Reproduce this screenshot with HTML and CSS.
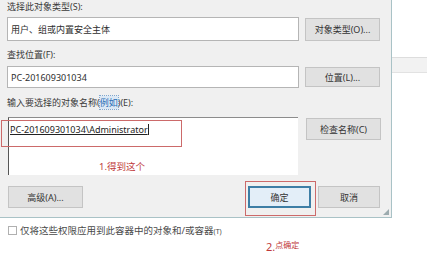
FILE: index.html
```html
<!DOCTYPE html>
<html lang="zh-CN">
<head>
    <meta charset="UTF-8">
    <meta name="viewport" content="width=device-width, initial-scale=1.0">
    <title>选择用户或组</title>
    <link rel="stylesheet" href="styles.css">
</head>
<body>
    <div class="screen">
        <div class="top">
            <div class="dialog">
                <div class="label label-first">选择此对象类型(S):</div>
                <div class="row row-type">
                    <div class="field">用户、组或内置安全主体</div>
                    <button class="btn">对象类型(O)...</button>
                </div>

                <div class="label label-loc">查找位置(F):</div>
                <div class="row row-loc">
                    <div class="field">PC-201609301034</div>
                    <button class="btn">位置(L)...</button>
                </div>

                <div class="label label-name">输入要选择的对象名称(<span class="link">例如</span>)(E):</div>
                <div class="row row-name">
                    <div class="names"><span class="resolved">PC-201609301034\Administrator</span><span class="caret"></span></div>
                    <button class="btn">检查名称(C)</button>
                </div>

                <div class="actions">
                    <button class="btn btn-adv">高级(A)...</button>
                    <button class="btn btn-ok">确定</button>
                    <button class="btn btn-cancel">取消</button>
                    <span class="grip"></span>
                </div>
            </div>
            <div class="aside">
                <div class="aside-band"></div>
            </div>
        </div>

        <div class="below">
            <span class="box"></span>
            <span class="check-text">仅将这些权限应用到此容器中的对象和/或容器<small>(T)</small></span>
        </div>

        <!-- annotations drawn over the screenshot -->
        <div class="mark mark-name"></div>
        <div class="note note-one">1.得到这个</div>
        <div class="mark mark-ok"></div>
        <div class="note note-two">2.<span class="sup">点确定</span></div>
    </div>
</body>
</html>
```

FILE: styles.css
```css
body {
    margin: 0;
    background: #ffffff;
    font-family: "Noto Sans", "Noto Sans CJK SC", sans-serif;
    font-size: 9px;
    color: #333333;
}
.screen {
    position: relative;
    width: 427px;
    height: 259px;
    overflow: hidden;
}
.top {
    display: flex;
}
.dialog {
    width: 392px;
    height: 218px;
    box-sizing: border-box;
    background: #f0f0f0;
    border-right: 1px solid #a9c2c6;
    border-bottom: 1px solid #a9c2c6;
    padding-left: 7px;
    position: relative;
}
.aside {
    flex: 1;
    background: #ffffff;
}
.aside-band {
    margin-top: 57px;
    height: 14px;
    background: #f2f2f2;
    border-top: 1px solid #dddddd;
    border-bottom: 1px solid #e2e2e2;
}
.label {
    line-height: 12px;
    color: #3a3a3a;
}
.label-first {
    padding-top: 1px;
}
.label-loc {
    margin-top: 8px;
}
.label-name {
    margin-top: 9px;
}
.link {
    color: #2a6fb5;
    background: #dbe8f5;
    outline: 1px dotted #7fa7d0;
}
.row {
    display: flex;
    align-items: flex-start;
    gap: 6px;
}
.row-type {
    margin-top: 4px;
}
.row-loc {
    margin-top: 5px;
}
.row-name {
    margin-top: 8px;
}
.field {
    width: 292px;
    box-sizing: border-box;
    background: #ffffff;
    border: 1px solid #b5b5b5;
    padding-left: 3px;
    display: flex;
    align-items: center;
    color: #2e2e2e;
}
.row-type .field {
    height: 24px;
}
.row-loc .field {
    height: 22px;
}
.btn {
    width: 75px;
    height: 22px;
    box-sizing: border-box;
    background: #e1e1e1;
    border: 1px solid #c4c4c4;
    font-family: inherit;
    font-size: 9px;
    color: #333333;
    padding: 0;
}
.row-type .btn {
    height: 23px;
    margin-top: 1px;
}
.row-loc .btn {
    height: 20px;
    margin-top: 1px;
}
.row-name .btn {
    margin-top: 1px;
    margin-left: 2px;
}
.names {
    width: 290px;
    height: 58px;
    box-sizing: border-box;
    margin-left: 1px;
    background: #ffffff;
    border-top: 1px solid #8c8c8c;
    border-left: 1px solid #555555;
    padding: 6px 0 0 1px;
    line-height: 12px;
    color: #222222;
}
.resolved {
    text-decoration: underline;
}
.caret {
    display: inline-block;
    width: 1px;
    height: 11px;
    background: #222222;
    vertical-align: -2px;
}
.actions {
    display: flex;
    margin-top: 11px;
}
.btn-adv {
    margin-left: 1px;
    width: 75px;
}
.btn-ok {
    margin-left: auto;
    width: 63px;
    background: #e3eef8;
    border: 2px solid #3d7ea6;
}
.btn-cancel {
    width: 62px;
    margin-left: 7px;
    margin-right: 11px;
}
.grip {
    position: absolute;
    right: 2px;
    bottom: 2px;
    width: 6px;
    height: 6px;
    background: radial-gradient(circle, #9aa9ad 0.7px, transparent 1px) 0 0 / 2px 2px;
    clip-path: polygon(100% 0, 100% 100%, 0 100%);
}
.below {
    display: flex;
    align-items: center;
    gap: 3px;
    padding: 5px 0 0 8px;
    font-size: 9.5px;
    color: #4a4a4a;
}
.box {
    width: 9px;
    height: 9px;
    box-sizing: border-box;
    border: 1px solid #b0b0b0;
    background: #ffffff;
}
.check-text small {
    font-size: 7px;
}
.mark {
    position: absolute;
    border: 1px solid #cc6a6a;
}
.mark-name {
    left: 1px;
    top: 120px;
    width: 179px;
    height: 25px;
}
.mark-ok {
    left: 245px;
    top: 181px;
    width: 69px;
    height: 33px;
}
.note {
    position: absolute;
    color: #c0393b;
    font-size: 9.5px;
    line-height: 12px;
}
.note-one {
    left: 99px;
    top: 161px;
}
.note-two {
    left: 266px;
    top: 239px;
    font-size: 11px;
}
.note-two .sup {
    font-size: 8px;
    vertical-align: 3px;
}
```
